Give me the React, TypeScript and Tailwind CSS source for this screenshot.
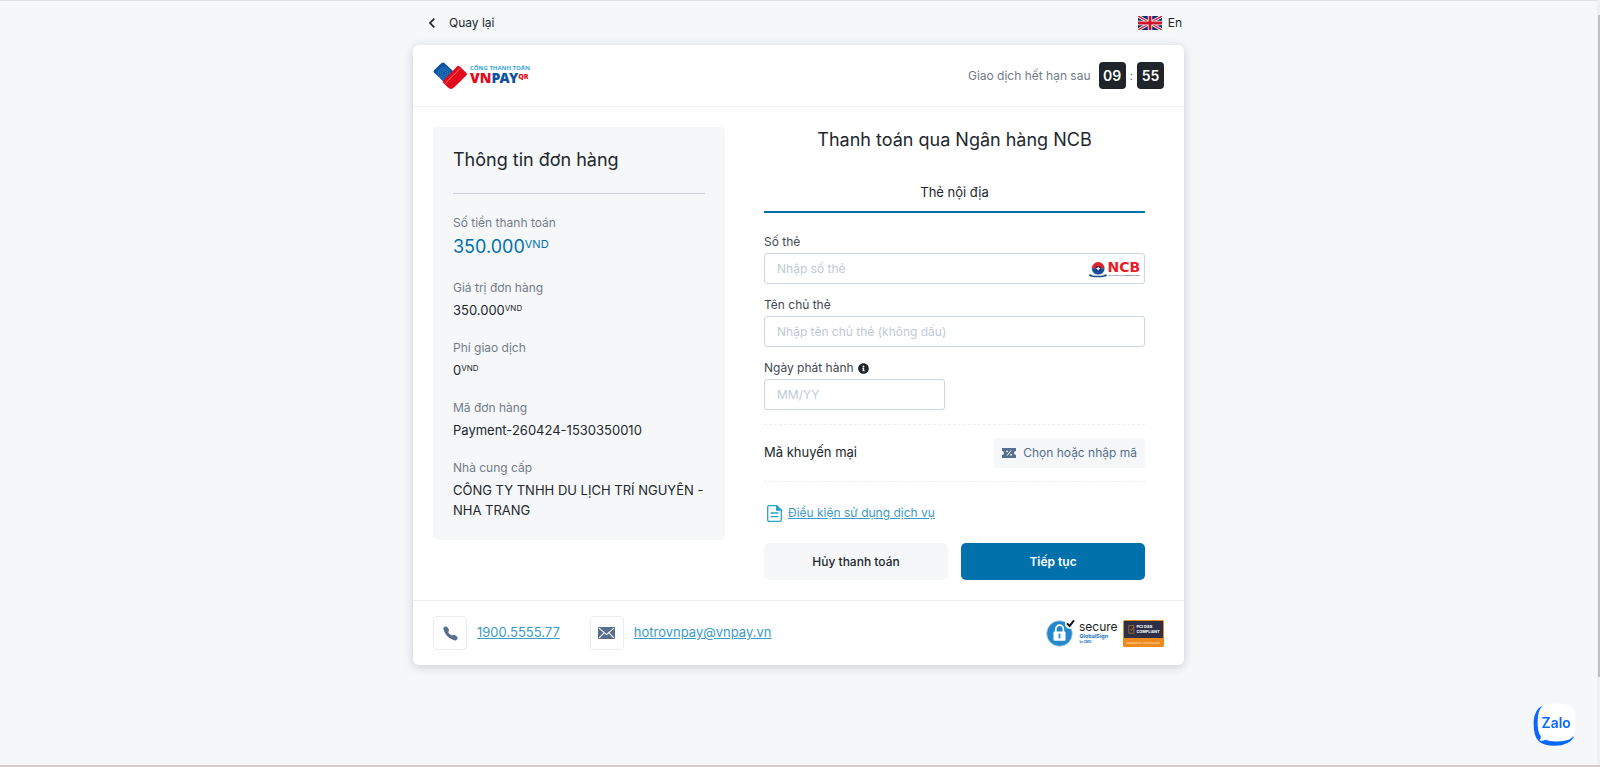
import { useState } from "react";
import type { ReactNode } from "react";
import { FaInfoCircle } from "react-icons/fa";

function VnpayLogo() {
  return (
    <svg width="100" height="28" viewBox="0 0 100 28" role="img" aria-label="VNPAY QR">
      <path d="M8.5 1 L1 8.2 Q0 9.3 1 10.4 L12 21 L21 10 L11.4 1 Q10 -0.2 8.5 1 Z" fill="#0b53a0" />
      <g fill="none" stroke="#2f86cc" strokeWidth="0.7">
        <circle cx="11" cy="11.5" r="2" />
        <circle cx="11" cy="11.5" r="3.9" />
        <circle cx="11" cy="11.5" r="5.8" />
      </g>
      <path d="M10.4 18.6 L24 4.4 Q25.3 3 26.7 4.4 L33.3 10.8 Q34.6 12.2 33.3 13.5 L21 25.6 Q18 28.2 15 25.6 L9.5 20 Z" fill="#e30a1c" />
      <path d="M12.5 21 L27 6.8" stroke="#f9a8ae" strokeWidth="0.7" fill="none" />
      <text x="37" y="7.6" fontFamily="'Open Sans', sans-serif" fontSize="6" fontWeight="700" fill="#35a4dc">
        CỔNG THANH TOÁN
      </text>
      <text x="37" y="21" fontFamily="'Noto Sans', sans-serif" fontSize="14" fontWeight="900" fill="#e30a1c">
        VN<tspan fill="#0b53a0">PAY</tspan><tspan dy="-4" fontSize="7">QR</tspan>
      </text>
    </svg>
  );
}

function UkFlag() {
  return (
    <svg width="24" height="14" viewBox="0 0 24 14" aria-hidden="true">
      <rect width="24" height="14" fill="#1b2a6b" />
      <path d="M0 0 L24 14 M24 0 L0 14" stroke="#fff" strokeWidth="3" />
      <path d="M0 0 L24 14 M24 0 L0 14" stroke="#d0142c" strokeWidth="1.2" />
      <path d="M12 0 V14 M0 7 H24" stroke="#fff" strokeWidth="4.4" />
      <path d="M12 0 V14 M0 7 H24" stroke="#d0142c" strokeWidth="2.8" />
    </svg>
  );
}

function NcbLogo() {
  return (
    <svg width="54" height="20" viewBox="0 -3 54 20" role="img" aria-label="NCB">
      <ellipse cx="9" cy="13.4" rx="9" ry="1.9" fill="#1c4a8c" />
      <ellipse cx="9" cy="12.6" rx="7.2" ry="1.2" fill="#fff" />
      <path d="M2.8 6.5 A6.4 6.4 0 0 1 15.6 6.5 Z" fill="#e0202a" />
      <path d="M2.8 6.2 A6.4 6.4 0 0 0 15.6 6.2 Z" fill="#174f98" />
      <circle cx="9.2" cy="6.6" r="2.7" fill="#1b2f66" />
      <path d="M9.2 4.4 L10 5.9 L11.5 6.6 L10 7.4 L9.2 8.8 L8.4 7.4 L6.9 6.6 L8.4 5.9 Z" fill="#fff" />
      <text x="18.5" y="10.4" fontFamily="'DejaVu Sans', sans-serif" fontSize="14" fontWeight="700" fill="#ea1c28">
        NCB
      </text>
      <text x="19.5" y="14" fontFamily="'Liberation Sans', sans-serif" fontSize="2.5" fontWeight="700" fill="#1c4a8c">
        NATIONAL CITIZEN BANK
      </text>
    </svg>
  );
}

function TicketIcon() {
  return (
    <svg width="14" height="10" viewBox="0 0 14 10" aria-hidden="true">
      <path d="M0 0 H14 V3 A2 2 0 0 0 14 7 V10 H0 V7 A2 2 0 0 0 0 3 Z" fill="#566f8d" />
      <path d="M5 7.6 L9 2.4" stroke="#fff" strokeWidth="1" />
      <circle cx="5" cy="3.3" r="0.9" fill="#fff" />
      <circle cx="9" cy="6.7" r="0.9" fill="#fff" />
    </svg>
  );
}

function FileIcon() {
  return (
    <svg width="15" height="17" viewBox="0 0 15 17" fill="none" stroke="#27a3c9" strokeWidth="1.3" aria-hidden="true">
      <path d="M2 0.7 H9.6 L14.3 5.2 V15 Q14.3 16.3 13 16.3 H2 Q0.7 16.3 0.7 15 V2 Q0.7 0.7 2 0.7 Z" />
      <path d="M9.6 0.7 V5.2 H14.3 Z" fill="#27a3c9" />
      <path d="M3.6 8 H11.4 M3.6 11.7 H11.4" />
    </svg>
  );
}

function PhoneIcon() {
  return (
    <svg width="15" height="15" viewBox="0 0 15 15" fill="none" stroke="#566f8d" strokeLinecap="round" aria-hidden="true">
      <path d="M2.4 3.6 Q3.6 9.6 11.4 12.6" strokeWidth="3.2" />
      <path d="M2.8 2.8 L3.6 4.2 M10.8 11.2 L12.2 12.1" strokeWidth="4.6" />
    </svg>
  );
}

function MailIcon() {
  return (
    <svg width="17" height="12" viewBox="0 0 17 12" aria-hidden="true">
      <rect width="17" height="12" rx="1" fill="#566f8d" />
      <path d="M1 1.2 L8.5 7.6 L16 1.2 M1.2 10.8 L6 5.8 M15.8 10.8 L11 5.8" stroke="#fff" strokeWidth="1.1" fill="none" />
    </svg>
  );
}

function SecureBadge() {
  return (
    <svg width="72" height="28" viewBox="0 0 72 28" role="img" aria-label="Secure GlobalSign">
      <circle cx="13.5" cy="14.5" r="12.8" fill="#2389cc" />
      <circle cx="13.5" cy="14.5" r="12.8" fill="none" stroke="#b9cfdf" strokeWidth="0.8" />
      <path d="M9.8 13 V10 A3.8 3.8 0 0 1 17.4 10 V13" fill="none" stroke="#fff" strokeWidth="1.7" />
      <rect x="7.5" y="12.4" width="12" height="9.4" rx="0.8" fill="#fff" />
      <path d="M13.5 14.6 V19.4" stroke="#2389cc" strokeWidth="1.8" />
      <circle cx="24" cy="5" r="5" fill="#fff" />
      <path d="M21 4.4 L23.6 7 L28 1.4" stroke="#111" strokeWidth="2" fill="none" />
      <text x="33" y="12.4" fontFamily="Inter, sans-serif" fontSize="12" fill="#222">
        secure
      </text>
      <text x="33.5" y="19.4" fontFamily="Inter, sans-serif" fontSize="5.4" fontWeight="700" fill="#1b74bd">
        GlobalSign
      </text>
      <text x="33.5" y="23.6" fontFamily="Inter, sans-serif" fontSize="3" fontWeight="700" fill="#1b74bd">
        by GMO
      </text>
    </svg>
  );
}

function PciBadge() {
  return (
    <svg width="41" height="27" viewBox="0 0 41 27" role="img" aria-label="PCI DSS Compliant">
      <rect width="41" height="27" rx="1.5" fill="#ef8a1f" />
      <rect x="1" y="1" width="39" height="17" fill="#2d3047" />
      <rect x="5.8" y="5.6" width="5" height="7.6" fill="none" stroke="#a9652a" strokeWidth="0.9" />
      <path d="M7.2 9.4 L8.2 10.6 L11 7" stroke="#ef8a1f" strokeWidth="0.7" fill="none" />
      <g fontFamily="Inter, sans-serif" fontWeight="700" fill="#fff">
        <text x="13.5" y="8.4" fontSize="4">PCI DSS</text>
        <text x="13.5" y="13.2" fontSize="3.8">COMPLIANT</text>
        <text x="3" y="23.6" fontSize="2.3" fill="#ffd9a8">ASSESSED BY CONTROLCASE</text>
      </g>
    </svg>
  );
}

function ZaloIcon() {
  return (
    <svg width="43" height="43" viewBox="0 0 43 43" aria-hidden="true">
      <path d="M10 2.4 Q1 6 0.6 19 Q0.4 33 5.5 38 Q10.5 43 22 42.8 Q36 42.6 41 34 L22 24 Z" fill="#0a68ff" />
      <path d="M22.5 0.4 Q35 0.4 38.8 4.2 Q42.7 8 42.7 19.4 Q42.7 31 38.8 34.8 Q35 38.6 22.5 38.6 Q16.4 38.6 12.4 36.8 Q9.6 38.4 6.4 37.4 Q8.4 35.4 7.8 33.2 Q4.6 29.6 4.6 19 Q4.6 7 10 2.6 Q13.6 0.4 22.5 0.4 Z" fill="#fff" />
      <text x="8.5" y="25" fontFamily="Inter, sans-serif" fontSize="14" fontWeight="600" fill="#0a68ff">
        Zalo
      </text>
    </svg>
  );
}

type InfoRowProps = { label: string; children: ReactNode };

function InfoRow({ label, children }: InfoRowProps) {
  return (
    <div>
      <dt className="text-xs leading-[22px] text-[#727c88]">{label}</dt>
      <dd className="mt-px text-[13px] leading-5">{children}</dd>
    </div>
  );
}

const inputClass =
  "h-[31px] w-full rounded-[3px] border border-[#cbd5e3] bg-white px-3 text-xs text-[#22272d] outline-none placeholder:text-[#bfc9d9] focus:border-[#0071ab]";
const labelClass = "flex items-center gap-1 text-xs leading-[22px] text-[#434950]";

export default function App() {
  const [cardNumber, setCardNumber] = useState("");
  const [cardName, setCardName] = useState("");
  const [issueDate, setIssueDate] = useState("");

  return (
    <div className="min-h-screen border-t border-[#dfe1e5] bg-[#f5f7f9] pr-[3px] font-[Inter,'Noto_Sans',sans-serif] text-[#22272d]">
      <div className="mx-auto max-w-[771px]">
        {/* Top bar */}
        <div className="flex h-11 items-center justify-between pr-0.5 pl-4 text-xs">
          <button type="button" className="flex items-center gap-3.5">
            <svg width="6" height="10" viewBox="0 0 6 10" fill="none" stroke="#22272d" strokeWidth="1.7" aria-hidden="true">
              <path d="M5.3 0.7 L1 5 L5.3 9.3" />
            </svg>
            Quay lại
          </button>
          <button type="button" className="flex items-center gap-1.5">
            <UkFlag />
            En
          </button>
        </div>

        <main className="rounded-md bg-white shadow-[0_2px_10px_rgba(30,50,70,0.2)]">
          <header className="flex h-[62px] items-center justify-between border-b border-[#eff0f2] px-5">
            <VnpayLogo />
            <div className="flex items-center gap-1 text-xs text-[#727c88]">
              <span className="mr-1">Giao dịch hết hạn sau</span>
              <span className="flex size-[27px] items-center justify-center rounded bg-[#20252b] text-sm font-semibold text-white">09</span>
              :
              <span className="flex size-[27px] items-center justify-center rounded bg-[#20252b] text-sm font-semibold text-white">55</span>
            </div>
          </header>

          <div className="grid grid-cols-[332px_1fr] items-start">
            {/* Order info */}
            <section className="m-5 rounded bg-[#f5f7f9] p-5">
              <h2 className="border-b border-[#c6ccd8] pb-5 text-lg leading-[26px]">Thông tin đơn hàng</h2>
              <dl className="flex flex-col gap-[17px] pt-[18px]">
                <div>
                  <dt className="text-xs leading-[22px] text-[#727c88]">Số tiền thanh toán</dt>
                  <dd className="flex items-start text-lg leading-[26px] text-[#0071ab]">
                    350.000<span className="text-[11px] leading-5">VND</span>
                  </dd>
                </div>
                <InfoRow label="Giá trị đơn hàng">
                  <span className="flex items-start">
                    350.000<span className="text-[8px] leading-4">VND</span>
                  </span>
                </InfoRow>
                <InfoRow label="Phí giao dịch">
                  <span className="flex items-start">
                    0<span className="text-[8px] leading-4">VND</span>
                  </span>
                </InfoRow>
                <InfoRow label="Mã đơn hàng">Payment-260424-1530350010</InfoRow>
                <InfoRow label="Nhà cung cấp">CÔNG TY TNHH DU LỊCH TRÍ NGUYÊN - NHA TRANG</InfoRow>
              </dl>
            </section>

            {/* Card form */}
            <section className="py-5 pr-[39px] pl-[19px]">
              <h1 className="text-center text-lg leading-[26px]">Thanh toán qua Ngân hàng NCB</h1>
              <div className="mt-[29px] border-b-2 border-[#0071ab] pb-[9px] text-center text-[13px] leading-5">Thẻ nội địa</div>

              <form onSubmit={(e) => e.preventDefault()}>
                <div className="flex flex-col gap-[10px] pt-[18px] pb-[14px]">
                  <div>
                    <label htmlFor="card-number" className={labelClass}>Số thẻ</label>
                    <div className="relative flex">
                      <input id="card-number" className={inputClass} placeholder="Nhập số thẻ" value={cardNumber} onChange={(e) => setCardNumber(e.target.value)} />
                      <span className="absolute inset-y-0 right-0.5 flex items-center">
                        <NcbLogo />
                      </span>
                    </div>
                  </div>
                  <div>
                    <label htmlFor="card-name" className={labelClass}>Tên chủ thẻ</label>
                    <input id="card-name" className={inputClass} placeholder="Nhập tên chủ thẻ (không dấu)" value={cardName} onChange={(e) => setCardName(e.target.value)} />
                  </div>
                  <div className="w-[181px]">
                    <label htmlFor="issue-date" className={labelClass}>
                      Ngày phát hành
                      <FaInfoCircle className="size-[11px] text-[#20252b]" />
                    </label>
                    <input id="issue-date" className={inputClass} placeholder="MM/YY" value={issueDate} onChange={(e) => setIssueDate(e.target.value)} />
                  </div>
                </div>

                <div className="flex items-center justify-between border-y border-dashed border-[#eceef0] py-[13px]">
                  <span className="text-[13px]">Mã khuyến mại</span>
                  <button type="button" className="flex h-[30px] items-center gap-[7px] rounded-[3px] bg-[#f5f7f9] px-2 text-xs text-[#566f8d]">
                    <TicketIcon />
                    Chọn hoặc nhập mã
                  </button>
                </div>

                <a href="#terms" className="mt-[21px] flex w-fit items-center gap-1.5 pl-[3px] text-xs leading-5 text-[#3a9bc8] underline">
                  <FileIcon />
                  Điều kiện sử dụng dịch vụ
                </a>

                <div className="mt-5 grid grid-cols-2 gap-[13px] text-xs">
                  <button type="button" className="h-[37px] rounded-[5px] bg-[#f5f7f9] font-medium">Hủy thanh toán</button>
                  <button type="submit" className="h-[37px] rounded-[5px] bg-[#0071ab] font-semibold text-white">Tiếp tục</button>
                </div>
              </form>
            </section>
          </div>

          <footer className="flex h-[65px] items-center justify-between border-t border-[#ebecee] px-5">
            <div className="flex items-center gap-[30px] text-[13px] text-[#3a9bc8]">
              <a href="tel:1900555577" className="flex items-center gap-2.5 underline">
                <span className="flex size-[34px] items-center justify-center rounded border border-[#ebecee]">
                  <PhoneIcon />
                </span>
                1900.5555.77
              </a>
              <a href="mailto:hotrovnpay@vnpay.vn" className="flex items-center gap-2.5 underline">
                <span className="flex size-[34px] items-center justify-center rounded border border-[#ebecee]">
                  <MailIcon />
                </span>
                hotrovnpay@vnpay.vn
              </a>
            </div>
            <div className="flex items-center gap-[5px]">
              <SecureBadge />
              <PciBadge />
            </div>
          </footer>
        </main>
      </div>

      <button type="button" aria-label="Zalo" className="fixed right-6 bottom-[21px]">
        <ZaloIcon />
      </button>
      <div className="fixed inset-y-0 right-0 w-[3px] bg-[#f0f0f1] pt-[15px] pl-px">
        <div className="h-[88%] bg-[#c1c1c3]" />
      </div>
      <div className="fixed inset-x-0 bottom-0 h-0.5 bg-[#d5c9cc]" />
    </div>
  );
}
